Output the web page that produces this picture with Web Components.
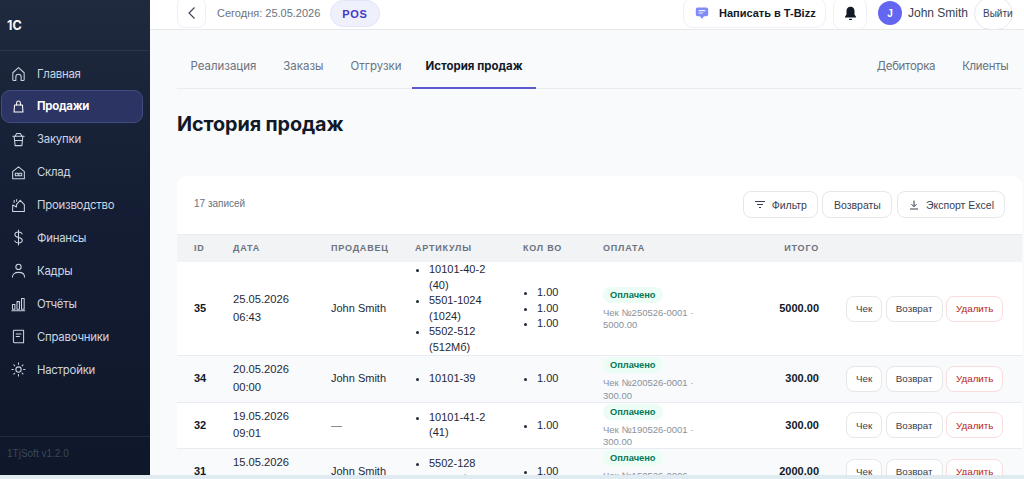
<!DOCTYPE html>
<html lang="ru">
<head>
<meta charset="utf-8">
<title>История продаж</title>
<style>
  html, body { margin: 0; height: 100%; overflow: hidden; }
  body { font-family: "Liberation Sans", Arial, sans-serif; background: #dfeaf1; }
  erp-app { height: 479px; }
</style>
</head>
<body>
<erp-app>
  <erp-sidebar slot="side">
    <nav-item icon="home">Главная</nav-item>
    <nav-item icon="bag" active>Продажи</nav-item>
    <nav-item icon="basket">Закупки</nav-item>
    <nav-item icon="store">Склад</nav-item>
    <nav-item icon="factory">Производство</nav-item>
    <nav-item icon="dollar">Финансы</nav-item>
    <nav-item icon="user">Кадры</nav-item>
    <nav-item icon="chart">Отчёты</nav-item>
    <nav-item icon="book">Справочники</nav-item>
    <nav-item icon="sun">Настройки</nav-item>
  </erp-sidebar>
  <top-bar slot="top"></top-bar>
  <tab-bar>
    <tab-link>Реализация</tab-link>
    <tab-link>Заказы</tab-link>
    <tab-link>Отгрузки</tab-link>
    <tab-link active>История продаж</tab-link>
    <tab-link slot="right">Дебиторка</tab-link>
    <tab-link slot="right">Клиенты</tab-link>
  </tab-bar>
  <page-title>История продаж</page-title>
  <sales-card></sales-card>
</erp-app>

<script>
// icons for the sidebar, 18x18 box
const ICONS = {
  home: '<path d="M3 15.5V8.2L9 2.8l6 5.4v7.3a.8.8 0 0 1-.8.8h-2.4v-3.6a2.8 2.8 0 0 0-5.6 0v3.6H3.8a.8.8 0 0 1-.8-.8z"/>',
  bag: '<path d="M4.8 7.4h8.4l.5 7.4H4.3z"/><path d="M7 7.4V5.2a2 2 0 0 1 4 0v2.2"/>',
  basket: '<path d="M3 5.5h12"/><path d="M4.4 5.5l1 10h7.2l1-10"/><path d="M5.5 5.5L7 2.6h4l1.5 2.9"/><path d="M5 10h8"/>',
  store: '<path d="M2.8 15.6V8L9 3l6.2 5v7.6z"/><rect x="5.6" y="9.8" width="3" height="2.6"/><rect x="9.4" y="9.8" width="3" height="2.6"/>',
  factory: '<path d="M2.8 15.4V8.4l4 2.2V8l4-4.4 4.4 4.4v7.4z"/><path d="M4.4 3.4v2.4M7 2.6v2"/>',
  dollar: '<path d="M12.8 5.2c-.6-1.4-2-2-3.8-2-2.2 0-3.8 1-3.8 2.8 0 4 7.8 2 7.8 6 0 1.8-1.8 2.8-4 2.8-2 0-3.4-.8-4-2.2"/><path d="M9 1v16"/>',
  user: '<circle cx="9" cy="5.2" r="2.8"/><path d="M2.6 16c0-3.4 2.6-5 6.4-5s6.4 1.6 6.4 5"/>',
  chart: '<rect x="2.6" y="10" width="2.6" height="5"/><rect x="7.4" y="7" width="2.6" height="8"/><rect x="12.2" y="3.6" width="2.8" height="11.4"/><path d="M2 16.6h13.6"/>',
  book: '<path d="M3.6 3.4c0-.6.4-1 1-1h9.8v13.2H4.8c-.7 0-1.2-.5-1.2-1.2z"/><path d="M6.6 6.4h5M6.6 9h3.4"/>',
  sun: '<circle cx="9" cy="9" r="2.8"/><path d="M9 2v1.6M9 14.4V16M2 9h1.6M14.4 9H16M4 4l1.2 1.2M12.8 12.8L14 14M4 14l1.2-1.2M12.8 5.2L14 4" stroke-dasharray="1.4 1"/>'
};

class ErpApp extends HTMLElement {
  constructor() {
    super();
    this.attachShadow({ mode: 'open' }).innerHTML = `
      <style>
        :host { display: flex; flex-direction: column; }
        .shell { flex: 1; min-height: 0; display: flex; background: #f8fafc; }
        .main { flex: 1; min-width: 0; display: flex; flex-direction: column; overflow: hidden; }
        .page { padding: 0 2px 0 27px; display: flex; flex-direction: column; }
        .strip { height: 4px; flex: none; background: #dfeaf1; }
      </style>
      <div class="shell">
        <slot name="side"></slot>
        <div class="main">
          <slot name="top"></slot>
          <div class="page"><slot></slot></div>
        </div>
      </div>
      <div class="strip"></div>
    `;
  }
}

class ErpSidebar extends HTMLElement {
  constructor() {
    super();
    this.attachShadow({ mode: 'open' }).innerHTML = `
      <style>
        :host {
          display: flex; flex-direction: column; flex: none; width: 150px;
          background: linear-gradient(180deg, #1f2a3e 0%, #141d33 45%, #0f172a 100%);
          color: #cbd5e1;
        }
        .logo {
          height: 51px; box-sizing: border-box; padding: 0 7px;
          display: flex; align-items: center;
          font-family: Inter, sans-serif; font-size: 12.5px; font-weight: 700; color: #f8fafc;
          border-bottom: 1px solid #2a3549;
        }
        nav { flex: 1; padding-top: 6px; display: flex; flex-direction: column; }
        .foot {
          height: 39px; box-sizing: border-box; padding: 11px 7px 0;
          border-top: 1px solid #212b3f;
          font-size: 10px; color: #3c475b;
        }
      </style>
      <div class="logo">1С</div>
      <nav><slot></slot></nav>
      <div class="foot">1TjSoft v1.2.0</div>
    `;
  }
}

class NavItem extends HTMLElement {
  constructor() {
    super();
    this.attachShadow({ mode: 'open' });
  }
  connectedCallback() {
    const icon = ICONS[this.getAttribute('icon')] || '';
    this.shadowRoot.innerHTML = `
      <style>
        :host { display: block; height: 32.9px; }
        .item {
          height: 33px; box-sizing: border-box; width: 142px; margin-left: 1px;
          display: flex; align-items: center; gap: 10px; padding-left: 8px;
          font-family: Inter, sans-serif; font-size: 11.4px; letter-spacing: -.25px;
          color: #cbd5e1; border: 1px solid transparent; border-radius: 9px;
        }
        :host([active]) .item {
          background: #2c3463; border-color: #434c80; color: #fff; font-weight: 700;
        }
        svg { width: 17px; height: 17px; fill: none; stroke: currentColor; stroke-width: 1.1; flex: none; stroke-linejoin: round; stroke-linecap: round; }
      </style>
      <div class="item">
        <svg viewBox="0 0 18 18">${icon}</svg>
        <span><slot></slot></span>
      </div>
    `;
  }
}

class TopBar extends HTMLElement {
  constructor() {
    super();
    this.attachShadow({ mode: 'open' }).innerHTML = `
      <style>
        :host {
          display: flex; flex: none; align-items: flex-start; height: 30px; box-sizing: border-box;
          background: #fff; border-bottom: 1px solid #e6e8ec; padding-left: 27px; overflow: hidden;
          font-size: 12px; color: #1f2937;
        }
        .box { margin-top: -3px; height: 31px; box-sizing: border-box; border: 1px solid #eef0f3; border-radius: 8px; background: #fff; display: flex; align-items: center; justify-content: center; flex: none; }
        .back { width: 29px; }
        .back svg { width: 14px; height: 14px; fill: none; stroke: #374151; stroke-width: 1.1; }
        .today { margin-left: 11px; height: 27px; line-height: 27px; width: 103px; font-size: 11px; color: #6b7280; white-space: nowrap; }
        .pos { margin: 0 0 0 10px; height: 27px; width: 50px; box-sizing: border-box; border-radius: 14px; background: #eef0fb; border: 1px solid #e0e4f6; color: #4338ca; font-size: 11px; font-weight: 700; letter-spacing: .7px; display: flex; align-items: center; justify-content: center; }
        .spacer { flex: 1; }
        .write { width: 143px; gap: 10px; justify-content: flex-start; padding-left: 11px; border-radius: 10px; font-size: 11px; font-weight: 700; color: #111827; white-space: nowrap; }
        .write svg { width: 14px; height: 14px; flex: none; fill: #818cf8; }
        .bell { width: 34px; height: 33px; margin-left: 7px; border-radius: 9px; }
        .bell svg { width: 15px; height: 15px; fill: #111827; }
        .avatar { margin-left: 11px; margin-top: 1px; width: 24px; height: 24px; border-radius: 50%; background: #6366f1; color: #fff; font-size: 10px; font-weight: 700; display: flex; align-items: center; justify-content: center; flex: none; }
        .name { margin-left: 6px; width: 59px; height: 27px; line-height: 27px; font-size: 12px; color: #374151; white-space: nowrap; }
        .exit { margin: -3px 11px 0 7px; width: 39px; height: 33px; border-radius: 17px; border-color: #e5e7eb; font-size: 10px; color: #374151; justify-content: flex-start; padding-left: 8px; white-space: nowrap; }
      </style>
      <div class="box back"><svg viewBox="0 0 14 14"><path d="M9.5 1.5L4 7l5.5 5.5"/></svg></div>
      <div class="today">Сегодня: 25.05.2026</div>
      <div class="pos">POS</div>
      <div class="spacer"></div>
      <div class="box write">
        <svg viewBox="0 0 14 14"><path d="M2.6 1.6h8.8a1.8 1.8 0 0 1 1.8 1.8v5a1.8 1.8 0 0 1-1.8 1.8H9L7 13 5 10.2H2.6A1.8 1.8 0 0 1 .8 8.4v-5a1.8 1.8 0 0 1 1.8-1.8z"/><path d="M3.6 4.6h6.8M3.6 7h4.4" stroke="#eef0ff" stroke-width="1.1"/></svg>
        Написать в T-Bizz
      </div>
      <div class="box bell">
        <svg viewBox="0 0 15 15"><path d="M7.5 .8c-2.5 0-4 1.9-4 4.2v3.4L2 10.8v.6h11v-.6l-1.5-2.4V5c0-2.3-1.5-4.2-4-4.2z"/><rect x="6" y="12.8" width="3" height="1.2" rx=".6"/></svg>
      </div>
      <div class="avatar">J</div>
      <div class="name">John Smith</div>
      <div class="box exit">Выйти</div>
    `;
  }
}

class TabBar extends HTMLElement {
  constructor() {
    super();
    this.attachShadow({ mode: 'open' }).innerHTML = `
      <style>
        :host { display: flex; justify-content: space-between; height: 59px; box-sizing: border-box; padding-top: 20px; border-bottom: 1px solid #e8ebef; flex: none; }
        div { display: flex; }
      </style>
      <div><slot></slot></div>
      <div><slot name="right"></slot></div>
    `;
  }
}

class TabLink extends HTMLElement {
  constructor() {
    super();
    this.attachShadow({ mode: 'open' }).innerHTML = `
      <style>
        :host {
          display: block; height: 39px; box-sizing: border-box; padding: 8px 13.5px 0;
          font-family: Inter, sans-serif; font-size: 11.45px; line-height: 16px; color: #6b7280; white-space: nowrap;
          border-bottom: 2px solid transparent;
        }
        :host([slot=right]) { letter-spacing: -.3px; }
        :host([active]) { margin-left: -3px; color: #111827; font-weight: 700; border-bottom-color: #5b5bd0; }
      </style>
      <slot></slot>
    `;
  }
}

class PageTitle extends HTMLElement {
  constructor() {
    super();
    this.attachShadow({ mode: 'open' }).innerHTML = `
      <style>
        :host { display: block; flex: none; height: 87px; box-sizing: border-box; padding-top: 21px; font-family: Inter, sans-serif; font-size: 19.8px; letter-spacing: -.1px; line-height: 28px; font-weight: 700; color: #111827; }
      </style>
      <slot></slot>
    `;
  }
}

class ActionButton extends HTMLElement {
  constructor() {
    super();
    this.attachShadow({ mode: 'open' }).innerHTML = `
      <style>
        :host {
          display: inline-flex; align-items: center; justify-content: center; gap: 6px; box-sizing: border-box;
          height: 26px; padding: 0 9px; background: #fff; border: 1px solid #e5e7eb; border-radius: 8px;
          font-size: 9.8px; color: #374151; white-space: nowrap; flex: none;
        }
        :host([danger]) { color: #b91c1c; border-color: #fbdcdc; }
        :host([large]) { height: 27px; padding: 0 10px; font-size: 10.5px; }
      </style>
      <slot></slot>
    `;
  }
}

class SalesRow extends HTMLElement {
  constructor() {
    super();
    this.attachShadow({ mode: 'open' });
  }
  set data(d) {
    const li = (list) => `<ul>${list.map((x) => `<li>${x}</li>`).join('')}</ul>`;
    this.shadowRoot.innerHTML = `
      <style>
        :host {
          display: grid; grid-template-columns: 39px 98px 84px 108px 80px 130px 86px 1fr;
          align-items: center; padding-left: 17px; box-sizing: border-box;
          border-top: 1px solid #e8ebef; background: #fff;
          font-size: 11px; line-height: 15.5px; color: #1f2937;
        }
        :host([first]) { border-top: 0; }
        :host([alt]) { background: #f8fafc; }
        .id, .total { font-weight: 700; color: #111827; }
        .date { line-height: 17.5px; font-size: 11.2px; }
        .muted { color: #6b7280; }
        ul { margin: 0; padding: 0 0 0 14px; }
        .arts { width: 76px; }
        .pay { display: flex; flex-direction: column; align-items: flex-start; padding: 1px 0 0; height: 45.5px; box-sizing: border-box; }
        .badge { height: 16px; line-height: 16px; padding: 0 7px; border-radius: 8px; background: #ecfdf5; color: #047857; font-size: 9.3px; font-weight: 700; }
        .note { margin-top: 4px; width: 92px; font-size: 9.5px; line-height: 12.7px; color: #8a919c; }
        .total { text-align: right; }
        .acts { display: flex; gap: 3.5px; padding-left: 27px; }
      </style>
      <div class="id">${d.id}</div>
      <div class="date">${d.date}<br>${d.time}</div>
      <div class="${d.seller === '—' ? 'muted' : ''}">${d.seller}</div>
      <div class="arts">${li(d.arts)}</div>
      <div>${li(d.qty)}</div>
      <div class="pay">
        <span class="badge">Оплачено</span>
        <span class="note">${d.note}</span>
      </div>
      <div class="total">${d.total}</div>
      <div class="acts">
        <action-button>Чек</action-button>
        <action-button>Возврат</action-button>
        <action-button danger>Удалить</action-button>
      </div>
    `;
  }
}

class SalesCard extends HTMLElement {
  constructor() {
    super();
    this.attachShadow({ mode: 'open' }).innerHTML = `
      <style>
        :host { display: block; flex: none; background: #fff; border-radius: 10px 10px 0 0; }
        .head { height: 58px; box-sizing: border-box; padding: 15px 17px 0; display: flex; align-items: flex-start; gap: 4.5px; }
        .count { margin-right: auto; font-size: 10px; line-height: 25px; color: #6b7280; }
        svg { width: 12px; height: 12px; fill: none; stroke: #374151; stroke-width: 1; flex: none; }
        .cols {
          display: grid; grid-template-columns: 39px 98px 84px 108px 80px 130px 86px 1fr;
          height: 28px; align-items: center; padding: 0 0 2px 17px; background: #f1f3f5; border-top: 1px solid #ebedf0;
          box-sizing: border-box;
          font-size: 9px; font-weight: 700; letter-spacing: .8px; color: #6b7280;
        }
        .cols .r { text-align: right; }
      </style>
      <div class="head">
        <div class="count">17 записей</div>
        <action-button large><svg viewBox="0 0 12 12"><path d="M1 2.5h10M3 5.5h6M5 8.5h2"/></svg>Фильтр</action-button>
        <action-button large style="width: 70px">Возвраты</action-button>
        <action-button large><svg viewBox="0 0 12 12"><path d="M6 1.5v6M3.5 5.2L6 7.7l2.5-2.5M2 10h8"/></svg>Экспорт Excel</action-button>
      </div>
      <div class="cols">
        <div>ID</div><div>ДАТА</div><div>ПРОДАВЕЦ</div><div>АРТИКУЛЫ</div><div>КОЛ ВО</div><div>ОПЛАТА</div><div class="r">ИТОГО</div><div></div>
      </div>
      <div id="rows"></div>
    `;
  }
  connectedCallback() {
    const rows = [
      { id: 35, date: '25.05.2026', time: '06:43', seller: 'John Smith', arts: ['10101-40-2 (40)', '5501-1024 (1024)', '5502-512 (512Мб)'], qty: ['1.00', '1.00', '1.00'], note: 'Чек №250526-0001 · 5000.00', total: '5000.00' },
      { id: 34, date: '20.05.2026', time: '00:00', seller: 'John Smith', arts: ['10101-39'], qty: ['1.00'], note: 'Чек №200526-0001 · 300.00', total: '300.00' },
      { id: 32, date: '19.05.2026', time: '09:01', seller: '—', arts: ['10101-41-2 (41)'], qty: ['1.00'], note: 'Чек №190526-0001 · 300.00', total: '300.00' },
      { id: 31, date: '15.05.2026', time: '10:12', seller: 'John Smith', arts: ['5502-128 (128Мб)'], qty: ['1.00'], note: 'Чек №150526-0006 · 2000.00', total: '2000.00' }
    ];
    const box = this.shadowRoot.getElementById('rows');
    rows.forEach((d, i) => {
      const row = document.createElement('sales-row');
      if (i === 0) row.setAttribute('first', '');
      if (i % 2) row.setAttribute('alt', '');
      row.data = d;
      box.appendChild(row);
    });
  }
}

customElements.define('erp-app', ErpApp);
customElements.define('erp-sidebar', ErpSidebar);
customElements.define('nav-item', NavItem);
customElements.define('top-bar', TopBar);
customElements.define('tab-bar', TabBar);
customElements.define('tab-link', TabLink);
customElements.define('page-title', PageTitle);
customElements.define('action-button', ActionButton);
customElements.define('sales-row', SalesRow);
customElements.define('sales-card', SalesCard);
</script>
</body>
</html>
